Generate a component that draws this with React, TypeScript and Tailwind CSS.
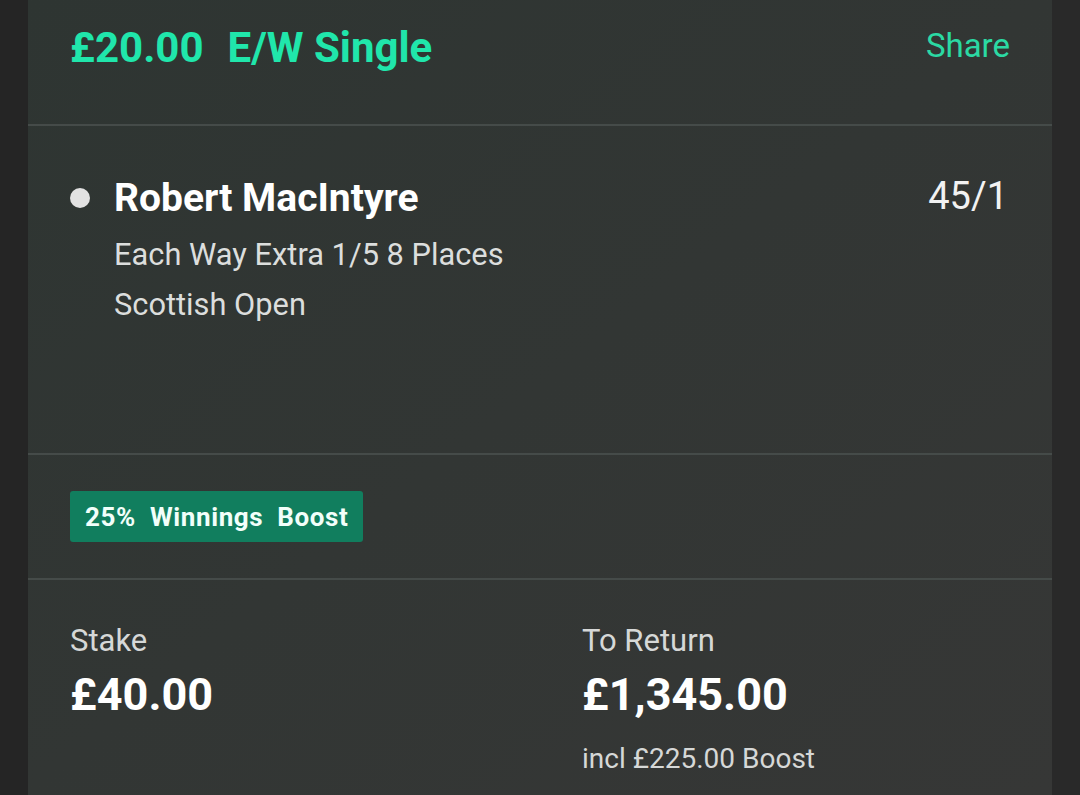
const bet = {
  stake: "£20.00",
  type: "E/W Single",
  selection: "Robert MacIntyre",
  market: "Each Way Extra 1/5 8 Places",
  event: "Scottish Open",
  odds: "45/1",
  totalStake: "£40.00",
  toReturn: "£1,345.00",
  boostAmount: "£225.00",
};

const Divider = () => <div className="h-[2px] w-full bg-[#454b49]" />;

const BetHeader = () => (
  <div className="flex h-[124px] items-start justify-between pl-[42px] pr-[42px]">
    <h1 className="mt-[27px] flex gap-[24px] text-[42px] font-bold leading-none text-[#20e6ab]">
      <span>{bet.stake}</span>
      <span>{bet.type}</span>
    </h1>
    <button className="mt-[29px] text-[33px] leading-none text-[#2bd9a3]">
      Share
    </button>
  </div>
);

const Selection = () => (
  <div className="flex h-[327px] items-start justify-between pl-[42px] pr-[44px] pt-[53px]">
    <div className="flex items-start">
      <div className="mt-[9px] h-5 w-5 rounded-full bg-[#e2e2e2]" />
      <div className="ml-[24px] flex flex-col">
        <h2 className="text-[39px] font-bold leading-none text-white">
          {bet.selection}
        </h2>
        <p className="mt-[12px] text-[30.8px] leading-[50px] text-[#dcdedd]">
          {bet.market}
        </p>
        <p className="text-[30.8px] leading-[50px] text-[#dcdedd]">
          {bet.event}
        </p>
      </div>
    </div>
    <span className="mt-[-2px] text-[38px] leading-none text-[#f2f2f2]">
      {bet.odds}
    </span>
  </div>
);

const BoostRow = () => (
  <div className="flex h-[123px] items-center pl-[42px]">
    <span className="flex h-[51px] items-center rounded-[3px] bg-[#117e5e] px-[15px] text-[26px] font-bold leading-none tracking-[0.6px] text-[#f2fffa]">
      25%&nbsp;&nbsp;Winnings&nbsp;&nbsp;Boost
    </span>
  </div>
);

const Totals = () => (
  <div className="grid grid-cols-2 pt-[45px]">
    <div className="flex flex-col px-[42px]">
      <span className="text-[31px] leading-none text-[#d6d8d7]">Stake</span>
      <span className="mt-[16px] text-[45px] font-bold leading-none text-white">
        {bet.totalStake}
      </span>
    </div>
    <div className="flex flex-col px-[42px]">
      <span className="text-[31px] leading-none text-[#d6d8d7]">To Return</span>
      <span className="mt-[16px] text-[45px] font-bold leading-none text-white">
        {bet.toReturn}
      </span>
      <span className="mt-[28px] text-[28px] leading-none text-[#d6d8d7]">
        incl {bet.boostAmount} Boost
      </span>
    </div>
  </div>
);

export default function App() {
  return (
    <div
      className="flex h-[795px] w-[1080px] overflow-hidden bg-[#282828]"
      style={{ fontFamily: "Roboto, 'Liberation Sans', sans-serif" }}
    >
      <div className="w-[28px] bg-[#252525]" />
      <div className="flex w-[1024px] flex-col bg-gradient-to-br from-[#2e3532] to-[#363736]">
        <BetHeader />
        <Divider />
        <Selection />
        <Divider />
        <BoostRow />
        <Divider />
        <Totals />
      </div>
      <div className="w-[28px] bg-[#292929]" />
    </div>
  );
}
